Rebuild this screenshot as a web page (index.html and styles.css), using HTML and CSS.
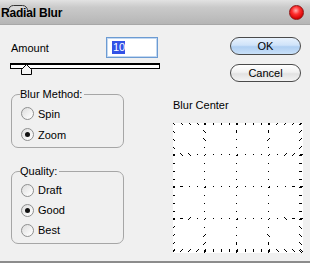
FILE: index.html
```html
<!DOCTYPE html>
<html lang="en">
<head>
    <meta charset="UTF-8">
    <title>Radial Blur</title>
    <link rel="stylesheet" href="styles.css">
</head>
<body>
<div class="window">
    <div class="titlebar">
        <svg class="sys-icon" width="22" height="8" viewBox="0 0 22 8">
            <rect x="1.5" y="1.5" width="19" height="10" rx="5" fill="#d8d8d8" stroke="#333" stroke-width="1"/>
        </svg>
        <span class="title">Radial Blur</span>
        <span class="close"></span>
    </div>
    <div class="content">
        <div class="left">
            <div class="amount-row">
                <label class="amount-label">Amount</label>
                <div class="amount-input"><span class="sel">10</span></div>
            </div>
            <div class="slider">
                <svg class="thumb" width="11" height="11" viewBox="0 0 11 11">
                    <path d="M0.5 10.5 V5.5 L5.5 0.5 L10.5 5.5 V10.5 Z" fill="#f4f4f4" stroke="#000" stroke-width="1"/>
                </svg>
            </div>
            <fieldset class="group method">
                <legend>Blur Method:</legend>
                <div class="option"><span class="radio"></span>Spin</div>
                <div class="option"><span class="radio checked"></span>Zoom</div>
            </fieldset>
            <fieldset class="group quality">
                <legend>Quality:</legend>
                <div class="option"><span class="radio"></span>Draft</div>
                <div class="option"><span class="radio checked"></span>Good</div>
                <div class="option"><span class="radio"></span>Best</div>
            </fieldset>
        </div>
        <div class="right">
            <button class="btn ok">OK</button>
            <button class="btn cancel">Cancel</button>
            <div class="center-label">Blur Center</div>
            <svg id="blurCenter" class="center-grid" width="130" height="130" viewBox="0 0 130 130"></svg>
        </div>
    </div>
</div>

<script>
    // Dotted grid whose marks point away from the blur centre
    const grid = document.getElementById('blurCenter');
    const lines = [0, 31, 63, 95, 127];
    const c = 64;
    const pixels = new Set();

    function mark(x, y) {
        const dx = x - c, dy = y - c;
        const d = Math.hypot(dx, dy);
        const n = Math.max(1, Math.round(1 + d * 0.028));
        const ux = d ? dx / d : 1, uy = d ? dy / d : 0;
        for (let k = 0; k < n; k++) {
            const o = k - (n - 1) / 2;
            const px = Math.round(x + ux * o), py = Math.round(y + uy * o);
            if (px >= 0 && px < 130 && py >= 0 && py < 130) {
                pixels.add(px + ',' + py);
            }
        }
    }

    lines.forEach(p => {
        for (let t = 0; t <= 128; t += 8) {
            mark(t, p);
            mark(p, t);
        }
    });

    let out = '<rect width="130" height="130" fill="#fff"/><g fill="#000">';
    pixels.forEach(key => {
        const [px, py] = key.split(',');
        out += `<rect x="${px}" y="${py}" width="1" height="1"/>`;
    });
    grid.innerHTML = out + '</g>';
</script>
</body>
</html>
```

FILE: styles.css
```css
body {
    margin: 0;
    background-color: #f0f0f0;
    font-family: "Liberation Sans", Arial, sans-serif;
    font-size: 11px;
    color: #000;
}
.window {
    position: relative;
    width: 310px;
    height: 263px;
    box-sizing: border-box;
    border-bottom: 2px solid #8c8c8c;
    overflow: hidden;
}
.titlebar {
    position: relative;
    display: flex;
    align-items: center;
    height: 24px;
    padding-left: 1px;
    background: linear-gradient(#e2e2e2, #cacaca 30%, #b6b6b6);
    border-bottom: 1px solid #a8a8a8;
}
.sys-icon {
    position: absolute;
    left: 7px;
    top: 4px;
}
.title {
    position: relative;
    font-size: 12px;
    font-weight: bold;
    letter-spacing: -0.2px;
    margin-top: 1px;
}
.close {
    margin-left: auto;
    margin-right: 6px;
    width: 13px;
    height: 13px;
    border-radius: 50%;
    border: 1px solid #901515;
    background: radial-gradient(circle at 45% 35%, #ffb0b0 0, #ff3030 35%, #d00000 75%, #a00000 100%);
}
.content {
    display: flex;
    padding: 12px 0 0 10px;
}
.left {
    width: 151px;
}
.amount-row {
    display: flex;
    align-items: center;
    height: 21px;
}
.amount-label {
    flex: 1;
    padding-left: 1px;
}
.amount-input {
    width: 52px;
    height: 21px;
    margin-right: 3px;
    box-sizing: border-box;
    border: 1px solid #6c9bd2;
    box-shadow: inset 0 0 0 1px #c2d8f2;
    background-color: #fff;
    padding: 3px 0 0 5px;
}
.sel {
    display: inline-block;
    background-color: #3352e6;
    color: #fff;
    line-height: 13px;
    padding: 0 0 0 1px;
}
.slider {
    position: relative;
    width: 150px;
    height: 6px;
    margin-top: 5px;
    box-sizing: border-box;
    border: 1px solid #000;
    border-top-width: 2px;
    background-color: #fff;
}
.thumb {
    position: absolute;
    left: 10px;
    top: -1px;
}
.group {
    width: 113px;
    margin: 19px 0 0 1px;
    padding: 2px 0 2px 9px;
    box-sizing: border-box;
    border: 1px solid #a6a6a6;
    border-radius: 7px;
}
.group legend {
    padding: 0 2px 0 0;
    margin-left: -1px;
    line-height: 13px;
}
.quality {
    margin-top: 17px;
    padding-bottom: 3px;
}
.option {
    display: flex;
    align-items: center;
    height: 21px;
}
.quality .option {
    height: 20px;
}
.radio {
    position: relative;
    width: 11px;
    height: 11px;
    margin-right: 4px;
    border: 1px solid #8e8f8f;
    border-radius: 50%;
    background: linear-gradient(135deg, #dcdcdc, #f7f7f7 70%, #ffffff);
}
.radio.checked::after {
    content: "";
    position: absolute;
    left: 3px;
    top: 3px;
    width: 5px;
    height: 5px;
    border-radius: 50%;
    background-color: #111;
}
.right {
    display: flex;
    flex-direction: column;
    align-items: flex-start;
}
.btn {
    width: 71px;
    height: 18px;
    margin-left: 69px;
    padding: 0;
    border: 1px solid #4a4a4a;
    border-radius: 9px;
    font-family: "Liberation Sans", Arial, sans-serif;
    font-size: 11px;
    color: #000;
}
.ok {
    background: linear-gradient(#e8f2fd, #cfe3f9 45%, #afcff2 55%, #c9e0f8);
}
.cancel {
    margin-top: 9px;
    background: linear-gradient(#ffffff, #f1f1f1 45%, #e2e2e2 55%, #f3f3f3);
}
.center-label {
    margin: 17px 0 0 12px;
    line-height: 13px;
}
.center-grid {
    margin: 11px 0 0 12px;
    shape-rendering: crispEdges;
}
```
